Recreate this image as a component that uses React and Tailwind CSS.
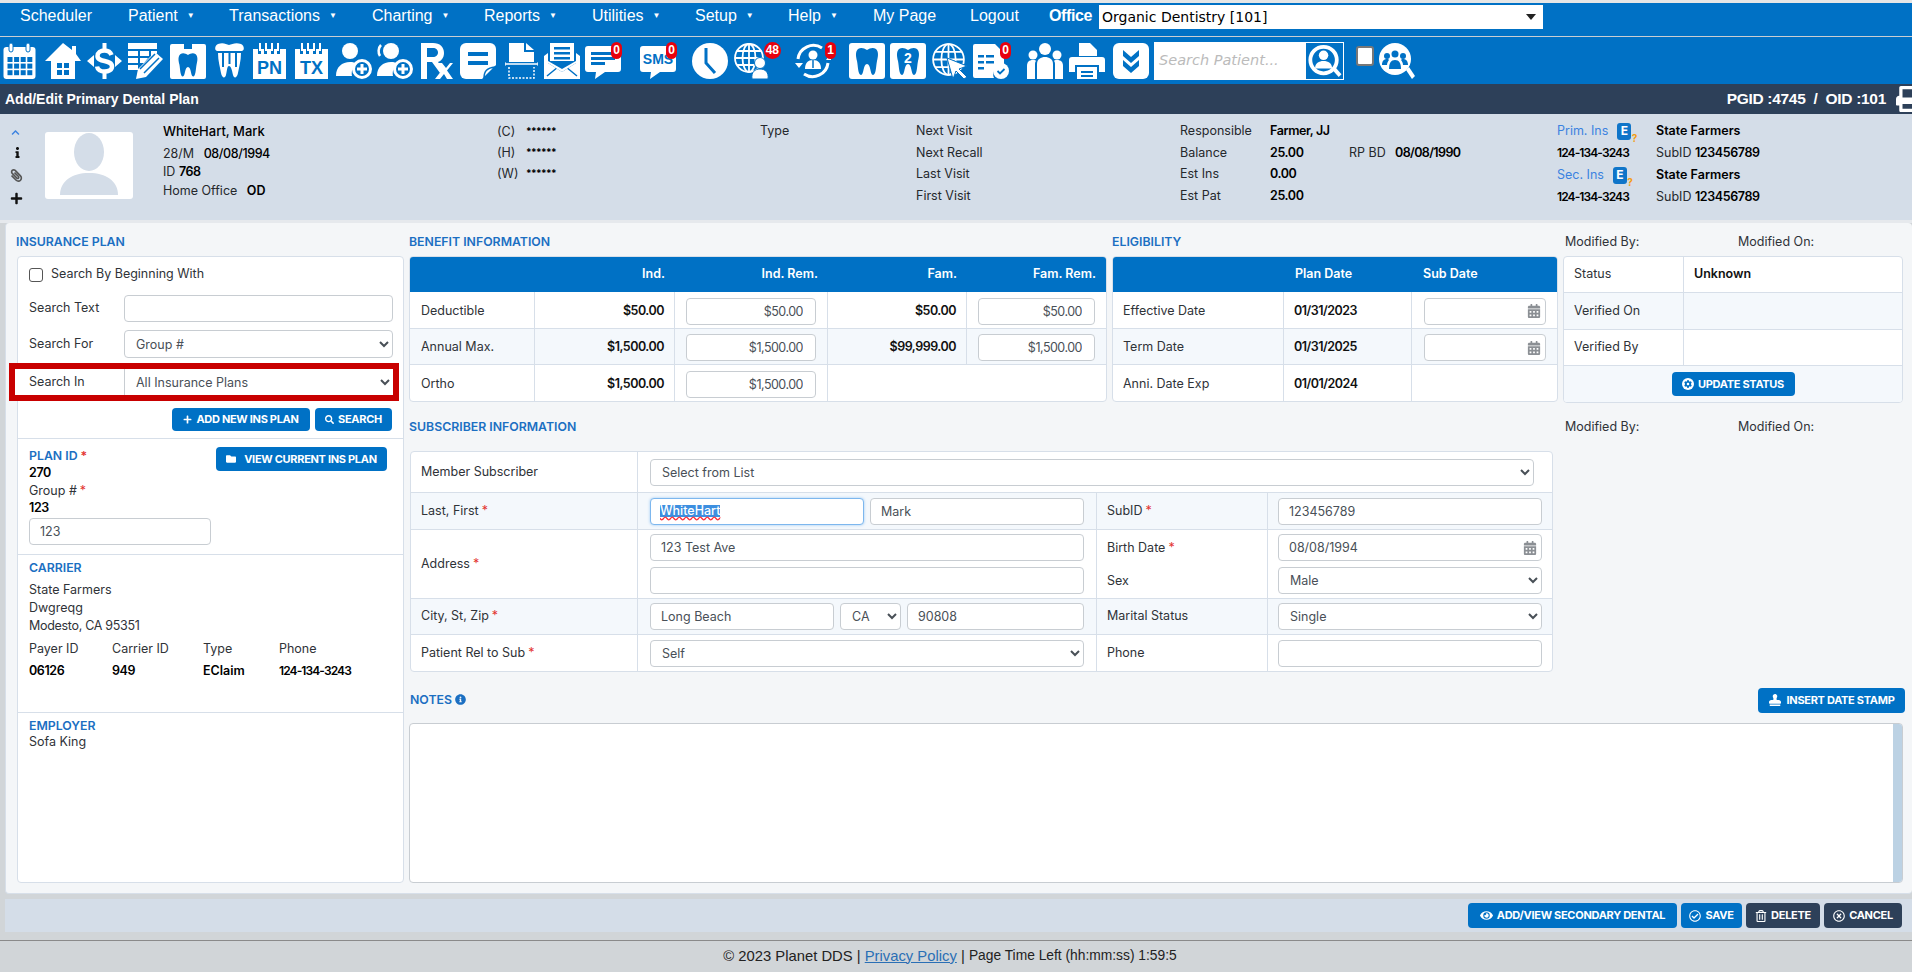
import {
  FaCalendarAlt, FaChevronUp, FaEye, FaFolder, FaInfo, FaInfoCircle, FaPaperclip, FaPlus, FaPrint,
  FaRegCheckCircle, FaRegTimesCircle, FaRegTrashAlt, FaSearch, FaStamp, FaCog,
} from "react-icons/fa";

const B = "#0071c5";

const navItems = [
  { label: "Scheduler", w: "w-[108px]" },
  { label: "Patient", w: "w-[101px]", caret: true },
  { label: "Transactions", w: "w-[143px]", caret: true },
  { label: "Charting", w: "w-[112px]", caret: true },
  { label: "Reports", w: "w-[108px]", caret: true },
  { label: "Utilities", w: "w-[103px]", caret: true },
  { label: "Setup", w: "w-[93px]", caret: true },
  { label: "Help", w: "w-[85px]", caret: true },
  { label: "My Page", w: "w-[97px]" },
  { label: "Logout", w: "w-[79px]" },
];

function Ico({ w = 36, className = "", children }) {
  return (
    <svg width={w} height={36} viewBox={`0 0 ${w} 36`} fill="#fff" className={`block shrink-0 ${className}`}>
      {children}
    </svg>
  );
}

function Badge({ children, className = "" }) {
  return (
    <span className={`absolute top-[-1px] flex h-[17px] min-w-[11px] items-center justify-center rounded-full bg-[#e8000d] px-[2px] font-['Liberation_Sans',sans-serif] text-[12px] font-bold leading-none text-white ${className}`}>
      {children}
    </span>
  );
}

function CalendarIcon() {
  const cells = [];
  for (let r = 0; r < 3; r++)
    for (let c = 0; c < 4; c++)
      cells.push(<rect key={`${r}-${c}`} x={4.5 + c * 6.6} y={14 + r * 6.6} width={5} height={5} fill={B} />);
  return (
    <Ico w={33}>
      <rect x="0.5" y="4" width="32" height="32" rx="3" />
      {cells}
      <rect x="6" y="0" width="4" height="9" rx="2" stroke={B} />
      <rect x="23" y="0" width="4" height="9" rx="2" stroke={B} />
    </Ico>
  );
}

function HouseIcon() {
  return (
    <Ico>
      <path d="M18 0 L27 7 V3 H31 V11 L36 18 H30 V36 H6 V18 H0 Z" />
      <path d="M12 20h5v5h-5zM19 20h5v5h-5zM12 27h5v5h-5zM19 27h5v5h-5z" fill={B} />
    </Ico>
  );
}

function DollarIcon() {
  return (
    <Ico w={35}>
      <path d="M0 18l7-6v12zM35 18l-7-6v12zM15.500 0h4v7h-4zM15.500 29h4v7h-4z" />
      <path d="M24.500 12c-1-3-4-4.500-7-4.500-4 0-7 2-7 5.500 0 7 14.500 3 14.500 10.500 0 3.500-3.500 5-7.500 5s-7-2-7.500-5" fill="none" stroke="#fff" strokeWidth="4.500" />
    </Ico>
  );
}

function PencilIcon() {
  return (
    <Ico w={35}>
      <path d="M0 0h29v6h-29zM0 8h10v5h-10zM12 8h9v5h-9zM23 8h6v2l-3 3h-3zM0 15h10v5h-10zM12 15h8l-4 5h-4zM0 22h10v5h-10z" />
      <path d="M8 36l2-10 17-17 8 7-17 18z" />
      <path d="M12 26l15-15M16 30l15-15" stroke={B} strokeWidth="1.500" />
    </Ico>
  );
}

function ToothPath({ className }) {
  return (
    <path
      className={className}
      d="M9 6c3-2 6-1 9 1 3-2 6-3 9-1 3 3 2 8 1 12-1 5-1 14-4 14-3 0-2-11-6-11s-3 11-6 11c-3 0-3-9-4-14-1-4-2-9 1-12z"
    />
  );
}

function ToothCardIcon() {
  return (
    <Ico>
      <path d="M2 1h12v5h8V1h12a2 2 0 012 2v31a2 2 0 01-2 2H2a2 2 0 01-2-2V3a2 2 0 012-2z" />
      <g transform="translate(2.500 6) scale(.86)" fill={B}>
        <ToothPath />
      </g>
    </Ico>
  );
}

function CrownIcon() {
  return (
    <Ico w={29}>
      <path d="M3 1c5-2 8 0 11 1 3-1 7-3 12-1 3 1 4 6 1 7H2C-1 7 0 2 3 1z" />
      <path d="M3 10h23c0 8-2 14-3 20-1 5-4 6-5 2-1-5-2-9-4-9s-2 5-3 9c-1 4-4 3-5-2-1-6-3-12-3-20z" />
      <path d="M8 10v14M14.500 10v11M21 10v14" stroke={B} strokeWidth="2" />
    </Ico>
  );
}

function PadIcon({ text }) {
  return (
    <Ico w={33}>
      <path d="M0 6h5v5h3V6h3v5h3V6h4v5h3V6h3v5h3V6h6v30H0z" />
      <path d="M6 0h2v8H6zM12 0h2v8h-2zM18 0h2v8h-2zM24 0h2v8h-2z" />
      <text x="16.500" y="31" textAnchor="middle" fill={B} fontSize="18" fontWeight="700" fontFamily="Liberation Sans, sans-serif">{text}</text>
    </Ico>
  );
}

function UserPlusIcon({ arc }) {
  return (
    <Ico>
      <circle cx="14" cy="8" r="8" />
      <path d="M0 33c0-9 6-14 14-14 3 0 5 .5 7 2-4 2-6 7-5 12z" />
      {arc && <path d="M4 2C1 5 1 10 3 13" fill="none" stroke="#fff" strokeWidth="2.500" />}
      <circle cx="26" cy="26" r="8.500" fill="none" stroke="#fff" strokeWidth="3" />
      <path d="M24.500 21h3v3.500H31v3h-3.500V31h-3v-3.500H21v-3h3.500z" />
    </Ico>
  );
}

function RxIcon() {
  return (
    <Ico w={33}>
      <path d="M1 0h12c7 0 11 4 11 10 0 5-3 8-6 9l6 8-4 3-8-11H7v17H1zM7 5v9h6c3 0 5-2 5-4.500S16 5 13 5z" />
      <path d="M16 20h6l4 5 4-5h3l-6 7.500L33 36h-6l-3-5-4 5h-5l7-9z" />
    </Ico>
  );
}

function NoteIcon() {
  return (
    <Ico>
      <path d="M6 0h24a6 6 0 016 6v16L22 36H6a6 6 0 01-6-6V6a6 6 0 016-6z" />
      <path d="M8 9h20v4H8zM8 18h20v4H8z" fill={B} />
      <path d="M24 35c0-7 3-10 11-11z" stroke={B} strokeWidth="1.500" />
    </Ico>
  );
}

function ScanIcon() {
  return (
    <Ico w={33}>
      <path d="M4 0h15v9h10v10H4zM21 0l8 7h-8z" />
      <path d="M0 21h33" stroke="#fff" strokeWidth="1.500" />
      <path d="M0 19v4M33 19v4" stroke="#fff" strokeWidth="1" />
      <path d="M4 24v11h25V24" fill="none" stroke="#fff" strokeWidth="1.500" strokeDasharray="2 1.500" />
    </Ico>
  );
}

function MailIcon() {
  return (
    <Ico>
      <path d="M6 0h24v18H6z" />
      <path d="M10 4h16v2.500H10zM10 9h16v2.500H10zM10 14h16v2.500H10z" fill={B} />
      <path d="M0 13l4-3v10l14 9 14-9V10l4 3v23H0z" />
      <path d="M3 33l11-9M33 33l-11-9" stroke={B} strokeWidth="1.500" />
      <path d="M4 18l14 8 14-8v2l-14 9-14-9z" />
    </Ico>
  );
}

function Bubble({ w = 36, children }) {
  return (
    <Ico w={w}>
      <path d="M3 3h30a3 3 0 013 3v20a3 3 0 01-3 3H20l-10 7 1-7H3a3 3 0 01-3-3V6a3 3 0 013-3z" />
      {children}
    </Ico>
  );
}

function ClockIcon() {
  return (
    <Ico>
      <circle cx="18" cy="18" r="18" />
      <path d="M14 5v15l9 10" fill="none" stroke={B} strokeWidth="3" />
    </Ico>
  );
}

function Globe({ stroke = 1.800 }) {
  return (
    <g fill="none" stroke="#fff" strokeWidth={stroke}>
      <circle cx="15" cy="15" r="14" />
      <ellipse cx="15" cy="15" rx="6.500" ry="14" />
      <path d="M15 1v28M1 15h28M3 8h24M3 22h24" />
    </g>
  );
}

function GlobeUserIcon() {
  return (
    <Ico>
      <Globe />
      <circle cx="26" cy="20" r="5.500" stroke={B} strokeWidth="1" />
      <path d="M18 36c-1-7 3-10 8-10s9 3 8 10z" stroke={B} strokeWidth="1" />
    </Ico>
  );
}

function RefreshUserIcon() {
  return (
    <Ico>
      <path d="M27 5A15.500 15.500 0 003 16M9 31a15.500 15.500 0 0024-11" fill="none" stroke="#fff" strokeWidth="3" />
      <path d="M0 20l4 5 4-5zM31 17l3-4 3 4z" />
      <circle cx="18" cy="12" r="4.500" />
      <path d="M10 26c0-6 3-9 8-9s8 3 8 9z" />
      <path d="M18 17v8" stroke={B} strokeWidth="1.500" />
    </Ico>
  );
}

function ToothBoxIcon({ num }) {
  return (
    <Ico>
      <rect width="36" height="36" rx="3" />
      <g fill={B}>
        <ToothPath />
      </g>
      {num && <text x="18" y="20" textAnchor="middle" fontSize="14" fontWeight="700" fontFamily="Liberation Sans, sans-serif">{num}</text>}
    </Ico>
  );
}

function GlobeArrowIcon() {
  return (
    <Ico>
      <g transform="scale(1.100)">
        <Globe stroke={1.600} />
      </g>
      <path d="M15 15l20 8-8 3 8 8-3 2-8-8-3 8z" stroke={B} strokeWidth="1" />
    </Ico>
  );
}

function DocCheckIcon() {
  return (
    <Ico>
      <path d="M2 1h20l9 9v11a10 10 0 00-10 14H2a2 2 0 01-2-2V3a2 2 0 012-2z" />
      <path d="M5 12h6v2.500H5zM13 12h8v2.500h-8zM5 18h6v2.500H5zM13 18h8v2.500h-8zM5 24h6v2.500H5z" fill={B} />
      <circle cx="28" cy="28" r="8" />
      <path d="M24.500 28l2.500 2.500 4.500-4.500" fill="none" stroke={B} strokeWidth="1.800" />
    </Ico>
  );
}

function PeopleIcon() {
  return (
    <Ico>
      <circle cx="18" cy="6" r="6" />
      <circle cx="6" cy="12" r="4.500" />
      <circle cx="30" cy="12" r="4.500" />
      <path d="M10 36V21c0-5 4-7 8-7s8 2 8 7v15z" />
      <path d="M0 36V23c0-4 2-6 6-6 2 0 3 .5 3 1-1 1-1 2-1 4v14zM36 36V23c0-4-2-6-6-6-2 0-3 .5-3 1 1 1 1 2 1 4v14z" />
    </Ico>
  );
}

function PrinterIcon() {
  return (
    <Ico>
      <path d="M10 0h11l7 7v6H10zM22 1l6 6h-6z" />
      <path d="M3 14h30a3 3 0 013 3v12h-6v-7H6v7H0V17a3 3 0 013-3z" />
      <path d="M8 24h20v12H8z" />
      <path d="M12 28h12v2H12zM12 32h12v2H12z" fill={B} />
    </Ico>
  );
}

function ChevronsIcon() {
  return (
    <Ico>
      <rect width="36" height="36" rx="6" />
      <path d="M10 7l8 7 8-7v6l-8 7-8-7zM10 17l8 7 8-7v6l-8 7-8-7z" fill={B} />
    </Ico>
  );
}

function LensUserIcon() {
  return (
    <div className="box-border h-[38px] w-[39px] shrink-0 border border-white bg-[#0071c5] p-px">
      <svg viewBox="0 0 36 36" className="block h-full w-full" fill="#fff">
        <circle cx="17" cy="17" r="14" fill="none" stroke="#fff" strokeWidth="4" />
        <path d="M26 27l3-3 7 8-3 3z" />
        <circle cx="17" cy="12" r="5" />
        <path d="M8 26c0-6 4-8 9-8s9 2 9 8z" />
      </svg>
    </div>
  );
}

function LensGroupIcon() {
  return (
    <Ico>
      <circle cx="16" cy="16" r="16" />
      <path d="M27 27l3-3 6 9-3 3z" />
      <g fill={B}>
        <circle cx="16" cy="11" r="3.500" />
        <circle cx="8" cy="13" r="3" />
        <circle cx="24" cy="13" r="3" />
        <path d="M10 26c0-6 2-9 6-9s6 3 6 9z" />
        <path d="M3 22c0-4 2-6 5-6 1 0 2 .5 2 1-1 1-2 3-2 5zM29 22c0-4-2-6-5-6-1 0-2 .5-2 1 1 1 2 3 2 5z" />
      </g>
    </Ico>
  );
}

function EIcon({ className = "" }) {
  return (
    <span className={`relative inline-flex h-[17px] w-[14px] items-center justify-center rounded-[3px] bg-[#0f75c9] text-[12px] font-bold leading-none text-white ${className}`}>
      E
      <span className="absolute right-[-6px] bottom-[-3px] text-[10px] font-bold text-[#f39c12]">?</span>
    </span>
  );
}

function Btn({ icon, children, className = "", dark }) {
  return (
    <button className={`flex shrink-0 items-center justify-center gap-[4px] rounded-[4px] text-[11px] font-bold tracking-[-0.3px] text-white ${dark ? "bg-[#2d4059]" : "bg-[#0071c5]"} ${className}`}>
      {icon}
      {children}
    </button>
  );
}

const inputCls = "box-border block min-w-0 rounded-[4px] border border-[#c8cdd2] bg-white text-[12.500px] text-[#495057] outline-none";

function Input({ value = "", className = "", right, cal }) {
  return (
    <div className={`relative ${className}`}>
      <input
        readOnly
        value={value}
        className={`${inputCls} h-full w-full pl-[10px] ${right ? "pr-[12px] text-right tracking-[-0.5px]" : "pr-[9px]"}`}
      />
      {cal && <FaCalendarAlt className="absolute top-1/2 right-[5px] -translate-y-1/2 text-[14px] text-[#8b8f94]" />}
    </div>
  );
}

function Select({ value, className = "" }) {
  return (
    <select value={value} onChange={() => {}} className={`${inputCls} pr-[2px] pl-[7px] ${className}`}>
      <option>{value}</option>
    </select>
  );
}

const Req = () => <span className="ml-[3px] text-[#e3342f]">*</span>;

const rowLine = "border-b border-[#d7dfe9]";
const colLine = "border-r border-[#d7dfe9]";
const title = "text-[12.300px] font-semibold text-[#1b6fc2]";
const val = "font-semibold tracking-[-0.5px] text-[#111]";
const phone = "text-[12px] font-semibold tracking-[-0.9px] text-black";

function BenefitRow({ label, ind, indRem, fam, famRem, alt, last, h = "h-[36px]" }) {
  return (
    <div className={`grid ${h} grid-cols-[125px_140px_153px_139px_1fr] ${last ? "" : rowLine} ${alt ? "bg-[#f4f8fc]" : ""}`}>
      <div className={`flex items-center pt-[2px] pl-[11px] ${colLine}`}>{label}</div>
      <div className={`flex items-center justify-end pt-[2px] pr-[10px] ${val} ${colLine}`}>{ind}</div>
      <div className={`flex items-center pt-[2px] pl-[11px] ${colLine}`}>
        <Input value={indRem} right className="h-[27px] w-[130px]" />
      </div>
      {fam ? (
        <div className={`flex items-center justify-end pt-[2px] pr-[10px] ${val} ${colLine}`}>{fam}</div>
      ) : (
        <div />
      )}
      {famRem ? (
        <div className="flex items-center pt-[2px] pl-[11px]">
          <Input value={famRem} right className="h-[27px] w-[117px]" />
        </div>
      ) : (
        <div />
      )}
    </div>
  );
}

function EligRow({ label, plan, cal, alt, last, h = "h-[36px]" }) {
  return (
    <div className={`grid ${h} grid-cols-[171px_128px_1fr] ${last ? "" : rowLine} ${alt ? "bg-[#f4f8fc]" : ""}`}>
      <div className={`flex items-center pt-[2px] pl-[10px] ${colLine}`}>{label}</div>
      <div className={`flex items-center pt-[2px] pl-[10px] ${val} ${colLine}`}>{plan}</div>
      <div className="flex items-center pt-[2px] pl-[12px]">
        {cal && <Input cal className="h-[27px] w-[122px]" />}
      </div>
    </div>
  );
}

function StatusRow({ label, value, alt, h = "h-[36px]" }) {
  return (
    <div className={`grid ${h} grid-cols-[120px_1fr] ${rowLine} ${alt ? "bg-[#f4f8fc]" : ""}`}>
      <div className={`flex items-center pl-[10px] ${colLine}`}>{label}</div>
      <div className="flex items-center pl-[10px] font-semibold text-[#111]">{value}</div>
    </div>
  );
}

function SubRow({ h, alt, last, label, mid, right }) {
  return (
    <div className={`grid ${h} grid-cols-[227px_459px_171px_1fr] ${last ? "" : rowLine} ${alt ? "bg-[#f4f8fc]" : ""}`}>
      <div className={`flex items-center pl-[10px] ${colLine}`}>{label}</div>
      <div className={`flex flex-col justify-center gap-[6px] pr-[11px] pl-[12px] ${colLine}`}>{mid}</div>
      {right}
    </div>
  );
}

function RightPair({ label, children }) {
  return (
    <>
      <div className={`flex items-center pl-[10px] ${colLine}`}>{label}</div>
      <div className="flex items-center pl-[10px]">{children}</div>
    </>
  );
}

export default function App() {
  return (
    <div className="flex h-[972px] w-[1912px] flex-col overflow-hidden bg-[#d1d5d8] font-[Inter,sans-serif] text-[12.500px] leading-none text-[#2f3338]">
      <div className="h-[3px] bg-[#e6e6e6]" />

      {/* top menu */}
      <div className="flex h-[33px] items-start bg-[#0071c5] pl-[20px] font-['Liberation_Sans',sans-serif] text-[16px] text-white">
        {navItems.map((n) => (
          <div key={n.label} className={`flex h-[25px] shrink-0 items-center ${n.w}`}>
            {n.label}
            {n.caret && <span className="ml-[9px] text-[8px]">▼</span>}
          </div>
        ))}
        <b className="flex h-[25px] w-[50px] shrink-0 items-center text-[16px] tracking-[-0.4px]">Office</b>
        <div className="mt-[2px] flex h-[24px] w-[444px] items-center justify-between bg-white pr-[7px] pl-[3px] font-['DejaVu_Sans',sans-serif] text-[14px] text-black">
          Organic Dentistry [101]
          <span className="h-0 w-0 border-x-[5px] border-t-[6px] border-x-transparent border-t-[#222]" />
        </div>
      </div>
      <div className="h-px bg-[#c9ced3]" />

      {/* toolbar */}
      <div className="flex h-[47px] items-center bg-[#0071c5] pl-[3px]">
        <CalendarIcon />
        <div className="ml-[9px]"><HouseIcon /></div>
        <div className="ml-[6px]"><DollarIcon /></div>
        <div className="ml-[6px]"><PencilIcon /></div>
        <div className="ml-[7px]"><ToothCardIcon /></div>
        <div className="ml-[9px]"><CrownIcon /></div>
        <div className="ml-[9px]"><PadIcon text="PN" /></div>
        <div className="ml-[9px]"><PadIcon text="TX" /></div>
        <div className="ml-[8px]"><UserPlusIcon /></div>
        <div className="ml-[5px]"><UserPlusIcon arc /></div>
        <div className="ml-[7px]"><RxIcon /></div>
        <div className="ml-[7px]"><NoteIcon /></div>
        <div className="ml-[9px]"><ScanIcon /></div>
        <div className="ml-[6px]"><MailIcon /></div>
        <div className="relative ml-[5px]">
          <Bubble>
            <path d="M6 9h24v3H6zM6 14h24v3H6zM6 19h14v3H6z" fill={B} />
          </Bubble>
          <Badge className="right-[-1px]">0</Badge>
        </div>
        <div className="relative ml-[19px]">
          <Bubble>
            <text x="18" y="21" textAnchor="middle" fill={B} fontSize="14" fontWeight="700" fontFamily="Liberation Sans, sans-serif">SMS</text>
          </Bubble>
          <Badge className="right-[-1px]">0</Badge>
        </div>
        <div className="ml-[16px]"><ClockIcon /></div>
        <div className="relative ml-[6px]">
          <GlobeUserIcon />
          <Badge className="right-[-11px]">48</Badge>
        </div>
        <div className="relative ml-[25px]">
          <RefreshUserIcon />
          <Badge className="right-[-5px]">1</Badge>
        </div>
        <div className="ml-[18px]"><ToothBoxIcon /></div>
        <div className="ml-[5px]"><ToothBoxIcon num="2" /></div>
        <div className="ml-[6px]"><GlobeArrowIcon /></div>
        <div className="relative ml-[5px]">
          <DocCheckIcon />
          <Badge className="right-[-2px]">0</Badge>
        </div>
        <div className="ml-[18px]"><PeopleIcon /></div>
        <div className="ml-[6px]"><PrinterIcon /></div>
        <div className="ml-[8px]"><ChevronsIcon /></div>
        <div className="ml-[5px] flex h-[38px] w-[151px] shrink-0 items-center bg-white pl-[5px] font-['DejaVu_Sans',sans-serif] text-[14.500px] text-[#bbb] italic">
          Search Patient...
        </div>
        <LensUserIcon />
        <div className="mb-[10px] ml-[12px] h-[20px] w-[18px] shrink-0 rounded-[3px] border-2 border-[#777] bg-white" />
        <div className="ml-[5px]"><LensGroupIcon /></div>
      </div>

      {/* page title */}
      <div className="flex h-[30px] items-center justify-between bg-[#2d4059] pl-[5px] font-['Liberation_Sans',sans-serif] font-bold text-white">
        <span className="text-[14px]">Add/Edit Primary Dental Plan</span>
        <div className="flex items-center">
          <span className="text-[15.500px] tracking-[-0.3px]">PGID :4745 &nbsp;/&nbsp; OID :101</span>
          <FaPrint className="mr-[-10px] ml-[10px] text-[26px]" />
        </div>
      </div>

      {/* patient strip */}
      <div className="flex h-[106px] bg-[#d4dde8] text-[#25282c]">
        <div className="flex w-[45px] shrink-0 flex-col items-start pt-[14px] pl-[10px]">
          <FaChevronUp className="ml-[1px] text-[9px] text-[#3b82e0]" />
          <FaInfo className="mt-[10px] ml-[2px] text-[11px] text-[#111]" />
          <FaPaperclip className="mt-[11px] -scale-x-100 text-[13px] text-[#555]" />
          <FaPlus className="mt-[10px] text-[13px] text-[#111]" />
        </div>
        <div className="w-[118px] shrink-0 pt-[18px]">
          <svg width="88" height="67" viewBox="0 0 88 67" className="block rounded-[3px] bg-white">
            <ellipse cx="44" cy="20" rx="15" ry="19" fill="#d4dde8" />
            <path d="M15 63c0-14 12-22 29-22s29 8 29 22z" fill="#d4dde8" />
          </svg>
        </div>
        <div className="w-[334px] shrink-0 pt-[7px]">
          <div className="h-[20px] text-[13px] leading-[20px] font-medium text-black">WhiteHart, Mark</div>
          <div className="mt-[4px] h-[18px] leading-[18px]">28/M <span className="ml-[6px] font-medium tracking-[-0.4px] text-black">08/08/1994</span></div>
          <div className="h-[17px] leading-[17px]">ID <span className="font-semibold tracking-[-0.4px] text-black">768</span></div>
          <div className="mt-[2px] h-[18px] leading-[18px]">Home Office <span className="ml-[6px] font-semibold text-black">OD</span></div>
        </div>
        <div className="w-[263px] shrink-0 pt-[8px]">
          {["(C)", "(H)", "(W)"].map((p) => (
            <div key={p} className="flex h-[21px] items-center">
              <span className="w-[29px]">{p}</span>
              <span className="mb-[3px] text-[10px] font-bold tracking-[-0.6px] text-black">******</span>
            </div>
          ))}
        </div>
        <div className="w-[156px] shrink-0 pt-[6px] leading-[21px]">Type</div>
        <div className="w-[264px] shrink-0 pt-[6px]">
          {["Next Visit", "Next Recall", "Last Visit", "First Visit"].map((t) => (
            <div key={t} className="h-[21.500px] leading-[21px]">{t}</div>
          ))}
        </div>
        <div className="grid w-[377px] shrink-0 auto-rows-[21.500px] grid-cols-[90px_79px_46px_1fr] pt-[6px] leading-[21px]">
          <div>Responsible</div>
          <div className="col-span-3 font-semibold tracking-[-0.4px] text-black">Farmer, JJ</div>
          <div>Balance</div>
          <div className="font-semibold tracking-[-0.4px] text-black">25.00</div>
          <div>RP BD</div>
          <div className="font-semibold tracking-[-0.6px] text-black">08/08/1990</div>
          <div>Est Ins</div>
          <div className="col-span-3 font-semibold tracking-[-0.4px] text-black">0.00</div>
          <div>Est Pat</div>
          <div className="col-span-3 font-semibold tracking-[-0.4px] text-black">25.00</div>
        </div>
        <div className="grid flex-1 auto-rows-[22px] grid-cols-[99px_1fr] pt-[6px] leading-[22px]">
          <div className="flex items-center text-[#3b82e0]">Prim. Ins <EIcon className="ml-[9px]" /></div>
          <div className="font-semibold text-black">State Farmers</div>
          <div className={phone}>124-134-3243</div>
          <div>SubID <span className="font-semibold tracking-[-0.4px] text-black">123456789</span></div>
          <div className="flex items-center text-[#3b82e0]">Sec. Ins <EIcon className="ml-[9px]" /></div>
          <div className="font-semibold text-black">State Farmers</div>
          <div className={phone}>124-134-3243</div>
          <div>SubID <span className="font-semibold tracking-[-0.4px] text-black">123456789</span></div>
        </div>
      </div>
      <div className="h-[3px] bg-[#e6e9ed]" />

      {/* main panel */}
      <div className="ml-[5px] flex h-[671px] shrink-0 gap-[5px] rounded-[4px] border-b border-l border-[#d7dfe9] bg-[#f4f6f8] pl-[11px]">
        {/* insurance plan column */}
        <div className="w-[387px] shrink-0">
          <div className={`ml-[-1px] flex h-[33px] items-center pt-[5px] ${title}`}>INSURANCE PLAN</div>
          <div className="h-[627px] rounded-[4px] border border-[#d7dfe9] bg-white">
            <div className={`h-[182px] ${rowLine}`}>
              <div className="flex h-[34px] items-center pt-px pl-[11px]">
                <span className="h-[14px] w-[14px] rounded-[3px] border border-[#555] bg-white" />
                <span className="ml-[8px]">Search By Beginning With</span>
              </div>
              <div className="mt-[4px] flex h-[27px] items-center pl-[11px]">
                <span className="w-[95px]">Search Text</span>
                <Input className="h-[27px] w-[269px]" />
              </div>
              <div className="mt-[8px] flex h-[28px] items-center pl-[11px]">
                <span className="w-[95px]">Search For</span>
                <Select value="Group #" className="h-[28px] w-[269px]" />
              </div>
              <div className="mt-[5px] ml-[-9px] box-border flex h-[38px] w-[390px] items-center border-[6px] border-[#c80000] bg-white pl-[14px]">
                <span className="w-[95px]">Search In</span>
                <Select value="All Insurance Plans" className="h-[26px] flex-1 rounded-none border-y-0 border-r-0" />
              </div>
              <div className="mt-[7px] flex justify-end gap-[5px] pr-[11px]">
                <Btn icon={<FaPlus className="text-[9px]" />} className="h-[23px] w-[138px]">ADD NEW INS PLAN</Btn>
                <Btn icon={<FaSearch className="text-[9px]" />} className="h-[23px] w-[77px]">SEARCH</Btn>
              </div>
            </div>

            <div className={`flex h-[116px] justify-between pt-[8px] pr-[16px] pl-[11px] ${rowLine}`}>
              <div>
                <div className={`h-[17px] leading-[17px] ${title}`}>PLAN ID<Req /></div>
                <div className="h-[18px] leading-[18px] font-semibold tracking-[-0.4px] text-black">270</div>
                <div className="h-[17px] leading-[17px]">Group #<Req /></div>
                <div className="h-[18px] leading-[18px] font-semibold tracking-[-0.4px] text-black">123</div>
                <Input value="123" className="mt-px h-[27px] w-[182px]" />
              </div>
              <Btn icon={<FaFolder className="mr-[4px] text-[10px]" />} className="h-[24px] w-[171px]">VIEW CURRENT INS PLAN</Btn>
            </div>

            <div className={`h-[158px] pt-[4px] pl-[11px] ${rowLine}`}>
              <div className={`h-[18px] leading-[18px] ${title}`}>CARRIER</div>
              <div className="mt-[4px] leading-[18px]">State Farmers</div>
              <div className="leading-[18px]">Dwgreqg</div>
              <div className="leading-[17px] tracking-[-0.3px]">Modesto, CA 95351</div>
              <div className="mt-[4px] grid grid-cols-[83px_91px_76px_1fr] leading-[22px]">
                <div>Payer ID</div>
                <div>Carrier ID</div>
                <div>Type</div>
                <div>Phone</div>
                <div className="font-semibold tracking-[-0.4px] text-black">06126</div>
                <div className="font-semibold tracking-[-0.4px] text-black">949</div>
                <div className="font-semibold text-black">EClaim</div>
                <div className={phone}>124-134-3243</div>
              </div>
            </div>

            <div className="pt-[4px] pl-[11px]">
              <div className={`h-[17px] leading-[17px] ${title}`}>EMPLOYER</div>
              <div className="leading-[16px]">Sofa King</div>
            </div>
          </div>
        </div>

        {/* right side */}
        <div className="w-[1495px] shrink-0">
          <div className="flex gap-[5px]">
            <div className="w-[698px] shrink-0">
              <div className={`flex h-[33px] items-center pt-[5px] ${title}`}>BENEFIT INFORMATION</div>
              <div className="overflow-hidden rounded-[4px] border border-[#d7dfe9] bg-white">
                <div className="grid h-[35px] grid-cols-[125px_140px_153px_139px_1fr] items-center bg-[#0071c5] font-semibold text-white">
                  <div />
                  <div className="pr-[10px] text-right">Ind.</div>
                  <div className="pr-[10px] text-right">Ind. Rem.</div>
                  <div className="pr-[10px] text-right">Fam.</div>
                  <div className="pr-[10px] text-right">Fam. Rem.</div>
                </div>
                <BenefitRow h="h-[37px]" label="Deductible" ind="$50.00" indRem="$50.00" fam="$50.00" famRem="$50.00" />
                <BenefitRow label="Annual Max." ind="$1,500.00" indRem="$1,500.00" fam="$99,999.00" famRem="$1,500.00" alt />
                <BenefitRow label="Ortho" ind="$1,500.00" indRem="$1,500.00" last />
              </div>
            </div>

            <div className="w-[446px] shrink-0">
              <div className={`flex h-[33px] items-center pt-[5px] ${title}`}>ELIGIBILITY</div>
              <div className="overflow-hidden rounded-[4px] border border-[#d7dfe9] bg-white">
                <div className="grid h-[35px] grid-cols-[171px_128px_1fr] items-center bg-[#0071c5] font-semibold text-white">
                  <div />
                  <div className="pl-[11px]">Plan Date</div>
                  <div className="pl-[11px]">Sub Date</div>
                </div>
                <EligRow h="h-[37px]" label="Effective Date" plan="01/31/2023" cal />
                <EligRow label="Term Date" plan="01/31/2025" cal alt />
                <EligRow label="Anni. Date Exp" plan="01/01/2024" last />
              </div>
            </div>

            <div className="w-[340px] shrink-0">
              <div className="flex h-[33px] items-center pt-[5px] pl-[2px]">
                <span className="w-[173px]">Modified By:</span>
                <span>Modified On:</span>
              </div>
              <div className="overflow-hidden rounded-[4px] border border-[#d7dfe9] bg-white">
                <StatusRow label="Status" value="Unknown" />
                <StatusRow h="h-[37px]" label="Verified On" alt />
                <StatusRow label="Verified By" />
                <div className="flex h-[36px] items-center justify-center bg-[#f4f8fc]">
                  <Btn icon={<span className="flex h-[12px] w-[12px] items-center justify-center rounded-full bg-white"><FaCog className="text-[8px] text-[#0071c5]" /></span>} className="h-[24px] w-[123px]">UPDATE STATUS</Btn>
                </div>
              </div>
            </div>
          </div>

          <div className="flex h-[48px] items-center">
            <div className={`w-[1156px] shrink-0 ${title}`}>SUBSCRIBER INFORMATION</div>
            <span className="w-[173px]">Modified By:</span>
            <span>Modified On:</span>
          </div>

          <div className="ml-px box-content w-[1141px] overflow-hidden rounded-[4px] border border-[#d7dfe9] bg-white">
            <div className={`grid h-[41px] grid-cols-[227px_1fr] ${rowLine}`}>
              <div className={`flex items-center pl-[10px] ${colLine}`}>Member Subscriber</div>
              <div className="flex items-center pl-[12px]">
                <Select value="Select from List" className="h-[27px] w-[884px]" />
              </div>
            </div>
            <SubRow
              h="h-[37px]"
              alt
              label={<>Last, First<Req /></>}
              mid={
                <div className="flex gap-[6px]">
                  <div className="box-border flex h-[27px] w-[214px] items-center rounded-[4px] border border-[#7db7ee] bg-white px-[9px] text-[#495057] shadow-[0_0_3px_#9cc9f2]">
                    <span className="bg-[#3d8fe0] font-medium text-white underline decoration-red-500 decoration-wavy">WhiteHart</span>
                  </div>
                  <Input value="Mark" className="h-[27px] w-[214px]" />
                </div>
              }
              right={
                <RightPair label={<>SubID<Req /></>}>
                  <Input value="123456789" className="h-[27px] w-[264px]" />
                </RightPair>
              }
            />
            <SubRow
              h="h-[69px]"
              label={<>Address<Req /></>}
              mid={
                <>
                  <Input value="123 Test Ave" className="h-[27px] w-[434px]" />
                  <Input className="h-[27px] w-[434px]" />
                </>
              }
              right={
                <>
                  <div className={`flex flex-col justify-center gap-[20px] pl-[10px] ${colLine}`}>
                    <div className="leading-[13px]">Birth Date<Req /></div>
                    <div className="leading-[13px]">Sex</div>
                  </div>
                  <div className="flex flex-col justify-center gap-[6px] pl-[10px]">
                    <Input value="08/08/1994" cal className="h-[27px] w-[264px]" />
                    <Select value="Male" className="h-[27px] w-[264px]" />
                  </div>
                </>
              }
            />
            <SubRow
              h="h-[36px]"
              alt
              label={<>City, St, Zip<Req /></>}
              mid={
                <div className="flex gap-[6px]">
                  <Input value="Long Beach" className="h-[27px] w-[184px]" />
                  <Select value="CA" className="h-[27px] w-[61px]" />
                  <Input value="90808" className="h-[27px] w-[177px]" />
                </div>
              }
              right={
                <RightPair label="Marital Status">
                  <Select value="Single" className="h-[27px] w-[264px]" />
                </RightPair>
              }
            />
            <SubRow
              h="h-[36px]"
              last
              label={<>Patient Rel to Sub<Req /></>}
              mid={<Select value="Self" className="h-[27px] w-[434px]" />}
              right={
                <RightPair label="Phone">
                  <Input className="h-[27px] w-[264px]" />
                </RightPair>
              }
            />
          </div>

          <div className="flex h-[51px] items-center justify-between pt-[5px] pl-[1px]">
            <div className={`flex items-center gap-[3px] ${title}`}>NOTES <FaInfoCircle className="text-[11px]" /></div>
            <Btn icon={<FaStamp className="mr-[2px] text-[12px]" />} className="mr-[-1px] h-[25px] w-[147px]">INSERT DATE STAMP</Btn>
          </div>

          <div className="flex h-[160px] w-[1494px] overflow-hidden rounded-[4px] border border-[#c8cdd2] bg-white">
            <div className="flex-1" />
            <div className="w-[9px] bg-[#bcd2e4]" />
          </div>
        </div>
      </div>

      {/* action bar */}
      <div className="mt-[5px] ml-[5px] flex h-[33px] shrink-0 items-center justify-end gap-[4px] bg-[#d4dde8] pr-[10px]">
        <Btn icon={<FaEye className="text-[13px]" />} className="h-[25px] w-[209px]">ADD/VIEW SECONDARY DENTAL</Btn>
        <Btn icon={<FaRegCheckCircle className="text-[12px]" />} className="h-[25px] w-[61px]">SAVE</Btn>
        <Btn dark icon={<FaRegTrashAlt className="text-[12px]" />} className="h-[25px] w-[74px]">DELETE</Btn>
        <Btn dark icon={<FaRegTimesCircle className="text-[12px]" />} className="h-[25px] w-[78px]">CANCEL</Btn>
      </div>

      {/* footer */}
      <div className="mt-[8px] flex h-[32px] shrink-0 items-center justify-center border-t border-[#8a8a8a] pr-[12px] pb-[1px] font-['Liberation_Sans',sans-serif] text-[14.800px] text-[#222]">
        © 2023 Planet DDS |&nbsp;<a className="text-[#2a6fb5] underline">Privacy Policy</a>&nbsp;|&nbsp; <span className="text-[13.800px]">Page Time Left (hh:mm:ss) 1:59:5</span>
      </div>
    </div>
  );
}
